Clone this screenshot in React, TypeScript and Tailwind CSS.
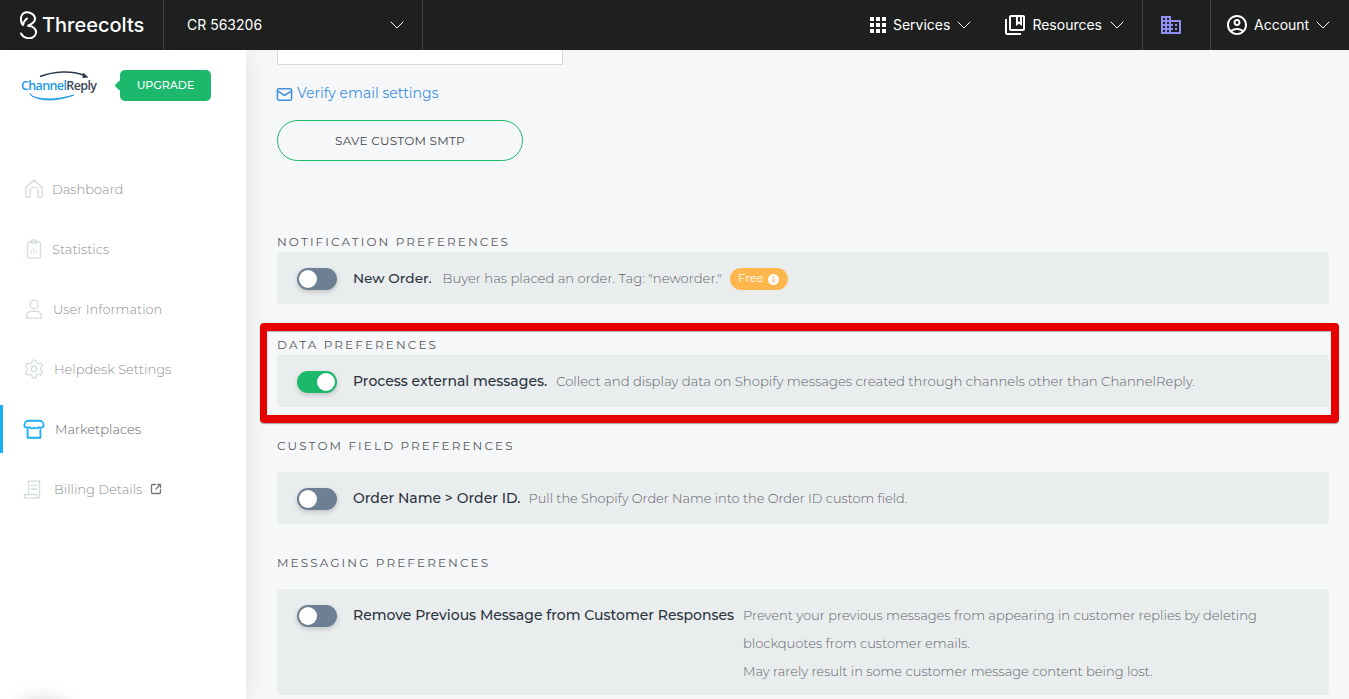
import { ChevronDown, Mail, Settings, SquareArrowOutUpRight } from "lucide-react";
import { MdDomain, MdOutlineAccountCircle, MdOutlineCollectionsBookmark } from "react-icons/md";
import type { ReactNode } from "react";

const body = "font-['Montserrat','Inter',sans-serif]";

const Toggle = ({ on = false }: { on?: boolean }) => (
  <div className={`relative mt-[2px] h-[22px] w-10 shrink-0 rounded-full shadow-[0_2px_5px_rgba(0,0,0,0.18)] ${on ? "bg-[#1cb86b]" : "bg-[#6c7f93]"}`}>
    <span className={`absolute top-[2px] h-[18px] w-[18px] rounded-full bg-white ${on ? "right-[2px]" : "left-[2px]"}`} />
  </div>
);

const Section = ({ title, titleClass, children, cardClass }: { title: string; titleClass: string; children: ReactNode; cardClass: string }) => (
  <section>
    <h3 className={`pt-px text-[12px] leading-4 font-normal tracking-[0.175em] text-[#55585c] uppercase ${titleClass}`}>{title}</h3>
    <div className={`flex rounded-[3px] bg-[#eaedee] pr-5 pl-5 ${cardClass}`}>{children}</div>
  </section>
);

const Row = ({ on, name, nameClass = "text-[14px]", children }: { on?: boolean; name: string; nameClass?: string; children: ReactNode }) => (
  <div className="flex h-[52px] items-center">
    <Toggle on={on} />
    <span className={`ml-4 font-medium whitespace-nowrap text-[#2c3440] ${nameClass}`}>{name}</span>
    {children}
  </div>
);

const Desc = ({ children, className = "" }: { children: ReactNode; className?: string }) => (
  <span className={`font-light text-[#5f6469] ${className}`}>{children}</span>
);

const NavIcon = ({ children }: { children: ReactNode }) => (
  <svg viewBox="0 0 24 24" className="h-[22px] w-[22px]" fill="none" stroke="currentColor" strokeWidth="1.5" strokeLinecap="round" strokeLinejoin="round">
    {children}
  </svg>
);

const navItems = [
  { label: "Dashboard", ml: "ml-[7px]", icon: <path d="M3 20V10.5L12 2.5l9 8V20a1 1 0 0 1-1 1h-3.5v-6.5a4.5 4.5 0 0 0-9 0V21H4a1 1 0 0 1-1-1z" /> },
  {
    label: "Statistics",
    ml: "ml-[7px]",
    icon: (
      <>
        <rect x="5" y="4" width="14" height="18" rx="2" />
        <rect x="9" y="2" width="6" height="4" rx="1.5" />
        <path d="M9 17v-4M12 17v-6M15 17v-3" strokeWidth="1" />
      </>
    ),
  },
  {
    label: "User Information",
    ml: "ml-[8px]",
    icon: (
      <>
        <circle cx="12" cy="7" r="4.5" />
        <path d="M4 22v-2.5C4 16 7 14.5 9 14.5h6c2 0 5 1.5 5 5V22z" />
      </>
    ),
  },
  { label: "Helpdesk Settings", ml: "ml-[9px]", gear: true, icon: null },
  {
    label: "Marketplaces",
    ml: "ml-[10px]",
    active: true,
    icon: (
      <>
        <path d="M5.500 3h13C21 3 22.500 6 22.500 8.500a3.500 3 0 0 1-5.300 1.500a3.500 3 0 0 1-5.200 .5a3.500 3 0 0 1-5.200-.5A3.500 3 0 0 1 1.500 8.500C1.500 6 3 3 5.500 3z" strokeWidth="2" />
        <path d="M5 12.500V21.500h14V12.500" strokeWidth="2" />
      </>
    ),
  },
  {
    label: "Billing Details",
    ml: "ml-[9px]",
    external: true,
    icon: (
      <>
        <path d="M6 18V3l2 1 2-1 2 1 2-1 2 1 2-1v16a3 3 0 0 1-3 3H4a2.500 2.500 0 0 1-2.500-2.500V18H15v1.500" />
        <path d="M9 8h6M9 12h6" />
      </>
    ),
  },
];

const Sidebar = () => (
  <aside className={`relative z-10 flex w-[246px] shrink-0 flex-col bg-white shadow-[0_0_22px_rgba(0,0,0,0.09)] ${body}`}>
    <div className="flex h-[115px] items-start pt-5 pl-[21px]">
      <div className="relative h-10 w-[76px]">
        <svg viewBox="0 0 76 40" className="absolute inset-0 h-10 w-[76px]" fill="none">
          <path d="M19 6.500C32 1.500 50-.5 65 6" stroke="#2b3a4f" strokeWidth="1.500" />
          <path d="M62 2.500l5.500 5-6 .5z" fill="#2b3a4f" />
          <path d="M9 23.500c1 1 1.500 2 2 2.500 12 5 28 3 42-1-13 5-31 8-43 .5z" fill="#1c9be8" stroke="#1c9be8" strokeWidth="0.800" />
        </svg>
        <span className="absolute top-[7px] left-0 font-['Open_Sans',sans-serif] text-[12.500px] font-semibold tracking-[-0.05em] whitespace-nowrap text-[#1c9be8]">
          Channel<span className="text-[#3b4858]">Reply</span>
        </span>
      </div>
      <div className="relative ml-[23px] flex h-[31px] w-[91px] items-center justify-center rounded-[5px] bg-[#1cb86b] text-[11px] font-medium text-white">
        <span className="absolute top-[12px] -left-[4px] h-[7px] w-[7px] rotate-45 bg-[#1cb86b]" />
        UPGRADE
      </div>
    </div>
    <nav className="flex flex-col gap-3">
      {navItems.map((item) => (
        <div key={item.label} className={`flex h-12 items-center border-l-[3px] pl-[20px] ${item.active ? "border-[#1aaef5]" : "border-transparent"}`}>
          <span className={item.active ? "text-[#1aaef5]" : "text-[#d6dde1]"}>
            {item.gear ? <Settings size={22} strokeWidth={1.5} /> : <NavIcon>{item.icon}</NavIcon>}
          </span>
          <span className={`${item.ml} pt-[2px] text-[13px] font-light ${item.active ? "text-[#62666b]" : "text-[#8d9093]"}`}>{item.label}</span>
          {item.external && <SquareArrowOutUpRight size={12} strokeWidth={2.6} className="ml-[8px] text-[#777]" />}
        </div>
      ))}
    </nav>
    <div className="absolute -bottom-[34px] left-[20px] h-[30px] w-[46px] rounded-full shadow-[0_0_22px_rgba(0,0,0,0.22)]" />
  </aside>
);

const Header = () => (
  <header className="flex h-[50px] shrink-0 items-stretch bg-[#1e2020] font-['Inter',sans-serif] text-white">
    <div className="flex w-[164px] items-center border-r border-[#444] pl-5">
      <svg viewBox="0 0 18 28" className="h-7 w-[18px]" fill="none" stroke="white" strokeWidth="2" strokeLinecap="round" strokeLinejoin="round">
        <path d="M8.300 14.700C13 12.500 15.500 10 15 7 14.300 3 9 .5 5 1.500 2 2.500.5 6 1 9.500c.3 2 1 3.500 2 4.500.5-3 2-5 4-6.500" />
        <path d="M8.300 14.700C13 15 16.500 18 16 22c-.5 4-5 6-9 5-3-.7-5-2.500-6-4.500" />
      </svg>
      <span className="ml-1 text-[20px] font-medium">Threecolts</span>
    </div>
    <div className="flex w-[259px] items-center justify-between border-r border-[#444] pr-[13px] pl-[23px] text-[14px]">
      <span className="pb-px">CR 563206</span>
      <ChevronDown size={24} strokeWidth={1} />
    </div>
    <div className="flex-1" />
    <div className="flex items-center pr-[13px] text-[14px]">
      <svg viewBox="0 0 16 16" className="h-4 w-4 fill-white">
        <path d="M0 0h4v4H0zM6 0h4v4H6zM12 0h4v4h-4zM0 6h4v4H0zM6 6h4v4H6zM12 6h4v4h-4zM0 12h4v4H0zM6 12h4v4H6zM12 12h4v4h-4z" />
      </svg>
      <span className="ml-[7px] pb-px">Services</span>
      <ChevronDown size={24} strokeWidth={1} className="ml-[2px]" />
      <MdOutlineCollectionsBookmark size={24} className="ml-[27px]" />
      <span className="ml-[5px] pb-px">Resources</span>
      <ChevronDown size={24} strokeWidth={1} className="ml-[3px]" />
    </div>
    <div className="flex w-[69px] items-center border-x border-[#444] pl-4">
      <MdDomain size={24} className="text-[#8f8ff5]" />
    </div>
    <div className="flex w-[138px] items-center pl-[14px] text-[14px]">
      <MdOutlineAccountCircle size={24} />
      <span className="ml-[5px] pb-px">Account</span>
      <ChevronDown size={24} strokeWidth={1} className="ml-[2px]" />
    </div>
  </header>
);

export default function App() {
  return (
    <div className="flex h-[699px] w-[1349px] flex-col overflow-hidden bg-[#f6f7f9]">
      <Header />
      <div className="flex min-h-0 flex-1">
        <Sidebar />
        <main className={`relative flex-1 pr-5 pl-[31px] ${body}`}>
          <div className="h-[15px] w-[286px] rounded-b-[2px] border-x border-b border-[#d4d6d8] bg-white" />
          <div className="mt-[19px] flex h-[18px] items-center gap-[4px] text-[14px] text-[#4491e0]">
            <Mail size={17} strokeWidth={2.2} className="mt-[3px] -ml-px" />
            Verify email settings
          </div>
          <div className="mt-[18px] flex h-[41px] w-[246px] items-center justify-center rounded-full border border-[#1cb86b] pt-px text-[12px] font-normal tracking-[0.02em] text-[#44474b]">
            SAVE CUSTOM SMTP
          </div>

          <Section title="Notification Preferences" titleClass="mt-[72px] mb-[2px]" cardClass="h-[52px]">
            <Row name="New Order." nameClass="text-[13.700px]">
              <Desc className="mt-[2px] ml-[11px] text-[13.150px]">Buyer has placed an order. Tag: "neworder."</Desc>
              <span className="mt-[2px] ml-[8px] flex h-[22px] items-center gap-[4px] rounded-full bg-[#ffb74d] pr-[9px] pl-2 text-[11.500px] text-white">
                Free
                <svg viewBox="0 0 12 12" className="h-[11px] w-[11px]">
                  <circle cx="6" cy="6" r="6" fill="white" />
                  <path d="M5.200 5.200h1.600v4H5.200zM5.200 2.500h1.600v1.600H5.200z" fill="#ffb74d" />
                </svg>
              </span>
            </Row>
          </Section>

          <Section title="Data Preferences" titleClass="mt-[32px] mb-[2px]" cardClass="h-[52px]">
            <Row on name="Process external messages.">
              <Desc className="mt-[2px] ml-[9px] text-[13.200px]">Collect and display data on Shopify messages created through channels other than ChannelReply.</Desc>
            </Row>
          </Section>

          <Section title="Custom Field Preferences" titleClass="mt-[30px] mb-[18px]" cardClass="h-[52px]">
            <Row name="Order Name > Order ID.">
              <Desc className="mt-[2px] ml-[8px] text-[12.870px]">Pull the Shopify Order Name into the Order ID custom field.</Desc>
            </Row>
          </Section>

          <Section title="Messaging Preferences" titleClass="mt-[30px] mb-[18px]" cardClass="h-[106px]">
            <div className="flex items-start">
              <div className="flex h-[52px] items-center">
                <Toggle />
                <span className="ml-4 text-[14px] font-medium whitespace-nowrap text-[#2c3440]">Remove Previous Message from Customer Responses</span>
              </div>
              <Desc className="mt-[12px] ml-[9px] w-[540px] text-[13px] leading-[28px]">
                Prevent your previous messages from appearing in customer replies by deleting blockquotes from customer emails.
                <br />
                May rarely result in some customer message content being lost.
              </Desc>
            </div>
          </Section>

          <div className="absolute top-[273px] left-[14px] h-[100px] w-[1079px] rounded-[4px] border-y-[8px] border-r-[8px] border-l-[7px] border-[#e60000] shadow-[0_1px_1px_rgba(0,0,0,0.35),inset_0_1px_1px_rgba(0,0,0,0.3)]" />
        </main>
      </div>
    </div>
  );
}
